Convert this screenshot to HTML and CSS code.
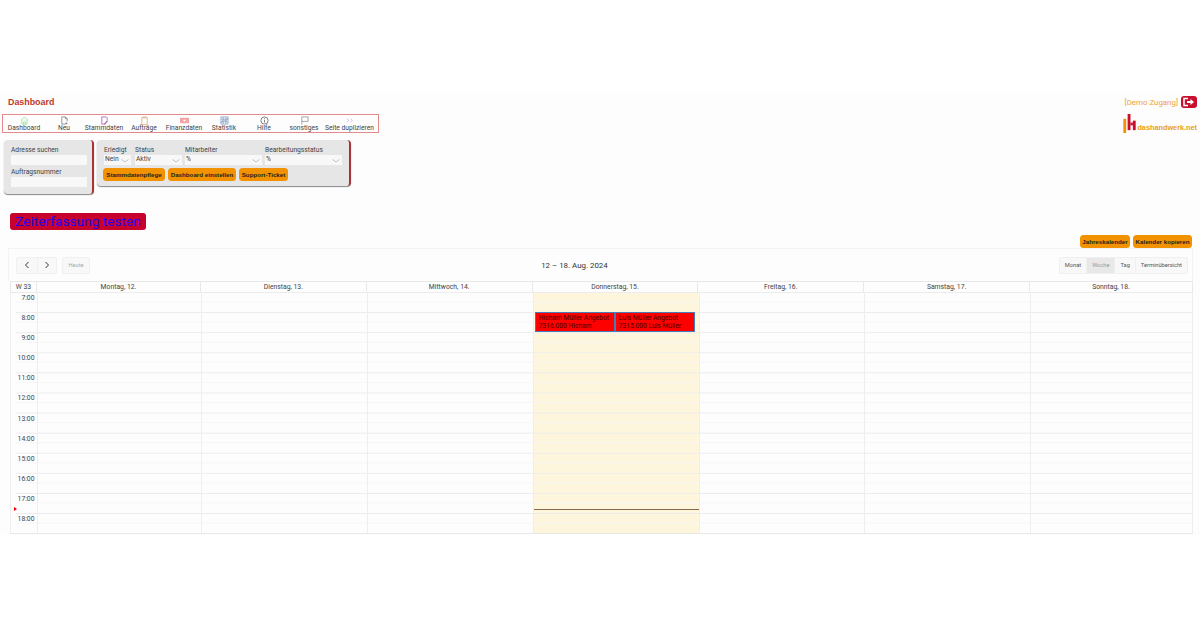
FILE: index.html
```html
<!DOCTYPE html>
<html lang="de">
<head>
<meta charset="utf-8">
<title>Dashboard</title>
<link rel="stylesheet" href="styles.css">
</head>
<body>
<div class="page">
  <header class="top">
    <div class="top-left">
      <h1 class="title">Dashboard</h1>
      <nav class="menu">
        <a class="menu-item"><svg class="ico" viewBox="0 0 10 10"><path d="M1 5 5 1l4 4M2.200 4.200V9h5.600V4.200M4 9V6.500h2V9" stroke="#8fdc8f"/></svg><span>Dashboard</span></a>
        <a class="menu-item"><svg class="ico" viewBox="0 0 10 10"><path d="M2 1h4l2 2v3M6 1v2h2M2 1v8h4M7 7v2.500M5.800 8.200h2.400" stroke="#777"/></svg><span>Neu</span></a>
        <a class="menu-item"><svg class="ico" viewBox="0 0 10 10"><path d="M2 1h5l1 1v3M2 1v8h4M8 5 5.500 8l-.5 1 1-.4L8.600 5.600" stroke="#a54aa5"/></svg><span>Stammdaten</span></a>
        <a class="menu-item"><svg class="ico" viewBox="0 0 10 10"><path d="M3.500 1.500H2V9.500h6V1.500H6.500M3.500 1h3v1.200h-3z" stroke="#d9a679"/></svg><span>Aufträge</span></a>
        <a class="menu-item"><svg class="ico" viewBox="0 0 10 10"><path d="M.5 2.500h9v5h-9z" fill="#f4a6a6" stroke="#f08a8a"/><circle cx="5" cy="5" r="1.200" fill="#fff"/></svg><span>Finanzdaten</span></a>
        <a class="menu-item"><svg class="ico" viewBox="0 0 10 10"><path d="M1 1h8v8H1zM1 3.500h8M1 6.500h8M3.500 1v8M6.500 1v8M1.500 7.500 4 4l2.500 2L9 2" stroke="#7f9fc0"/></svg><span>Statistik</span></a>
        <a class="menu-item"><svg class="ico" viewBox="0 0 10 10"><circle cx="5" cy="5" r="4" stroke="#555"/><path d="M5 4.300V7.300M5 2.500v1" stroke="#555"/></svg><span>Hilfe</span></a>
        <a class="menu-item"><svg class="ico" viewBox="0 0 10 10"><path d="M2 9.500V1h7v5H2" stroke="#888"/></svg><span>sonstiges</span></a>
        <a class="menu-item menu-last"><svg class="ico" viewBox="0 0 10 10"><path d="M2 3l2 2-2 2M6 3l2 2-2 2" stroke="#c9a0e8"/></svg><span>Seite duplizieren</span></a>
      </nav>
    </div>
    <div class="top-right">
      <div class="user"><span class="demo">[Demo Zugang]</span><span class="logout"><svg viewBox="0 0 16 12" class="logout-ico"><path d="M7 2.500H3v7h4" stroke="#fff" stroke-width="1.500" fill="none"/><path d="M6 5h3.500V3L13 6 9.500 9V7H6z" fill="#fff"/></svg></span></div>
      <div class="logo"><svg class="logo-mark" viewBox="0 0 14 20"><rect x="0" y="5" width="3" height="15" fill="#f39200"/><rect x="4.500" y="0" width="3" height="17" fill="#c8102e"/><rect x="10" y="7" width="3" height="10" fill="#c8102e"/><rect x="7.500" y="9" width="2.500" height="3" fill="#c8102e"/></svg><span class="logo-text">dashandwerk.net</span></div>
    </div>
  </header>

  <section class="filters">
    <div class="panel panel-search">
      <label class="field"><span class="lbl">Adresse suchen</span><span class="input"></span></label>
      <label class="field"><span class="lbl">Auftragsnummer</span><span class="input"></span></label>
    </div>
    <div class="panel panel-main">
      <div class="selects">
        <label class="field s-erl"><span class="lbl">Erledigt</span><span class="select">Nein<svg class="chev" viewBox="0 0 8 4"><path d="M.5.500 4 3 7.500.5"/></svg></span></label>
        <label class="field s-sta"><span class="lbl">Status</span><span class="select">Aktiv<svg class="chev" viewBox="0 0 8 4"><path d="M.5.500 4 3 7.500.5"/></svg></span></label>
        <label class="field s-mit"><span class="lbl">Mitarbeiter</span><span class="select">%<svg class="chev" viewBox="0 0 8 4"><path d="M.5.500 4 3 7.500.5"/></svg></span></label>
        <label class="field s-bea"><span class="lbl">Bearbeitungsstatus</span><span class="select">%<svg class="chev" viewBox="0 0 8 4"><path d="M.5.500 4 3 7.500.5"/></svg></span></label>
      </div>
      <div class="btns">
        <a class="btn b-stamm">Stammdatenpflege</a>
        <a class="btn b-dash">Dashboard einstellen</a>
        <a class="btn b-supp">Support-Ticket</a>
      </div>
    </div>
  </section>

  <a class="test-btn">Zeiterfassung testen</a>

  <div class="cal-actions">
    <a class="btn b-jahr">Jahreskalender</a>
    <a class="btn b-kop">Kalender kopieren</a>
  </div>

  <section class="cal">
    <div class="cal-bar">
      <div class="nav-left">
        <div class="group">
          <span class="g-btn nav"><svg viewBox="0 0 6 8" class="arrow"><path d="M4.500 1 1.500 4l3 3"/></svg></span>
          <span class="g-btn nav"><svg viewBox="0 0 6 8" class="arrow"><path d="M1.500 1l3 3-3 3"/></svg></span>
        </div>
        <span class="g-btn today">Heute</span>
      </div>
      <div class="range">12 – 18. Aug. 2024</div>
      <div class="group">
        <span class="g-btn">Monat</span>
        <span class="g-btn active">Woche</span>
        <span class="g-btn">Tag</span>
        <span class="g-btn">Terminübersicht</span>
      </div>
    </div>
    <div class="cal-head">
      <div class="cw">W 33</div>
      <div class="dh">Montag, 12.</div>
      <div class="dh">Dienstag, 13.</div>
      <div class="dh">Mittwoch, 14.</div>
      <div class="dh">Donnerstag, 15.</div>
      <div class="dh">Freitag, 16.</div>
      <div class="dh">Samstag, 17.</div>
      <div class="dh">Sonntag, 18.</div>
    </div>
    <div class="cal-body">
      <div class="hours">
        <div class="hour"><span>7:00</span></div>
        <div class="hour"><span>8:00</span></div>
        <div class="hour"><span>9:00</span></div>
        <div class="hour"><span>10:00</span></div>
        <div class="hour"><span>11:00</span></div>
        <div class="hour"><span>12:00</span></div>
        <div class="hour"><span>13:00</span></div>
        <div class="hour"><span>14:00</span></div>
        <div class="hour"><span>15:00</span></div>
        <div class="hour"><span>16:00</span></div>
        <div class="hour"><span>17:00</span></div>
        <div class="hour"><span>18:00</span></div>
      </div>
      <div class="col"></div>
      <div class="col"></div>
      <div class="col"></div>
      <div class="col col-today">
        <div class="event ev-a">Hicham Müller Angebot<br>7316.000 Hicham</div>
        <div class="event ev-b">Luis Müller Angebot<br>7315.000 Luis Müller</div>
        <div class="now-line"></div>
      </div>
      <div class="col"></div>
      <div class="col"></div>
      <div class="col"></div>
      <div class="now-arrow"></div>
    </div>
  </section>
</div>
</body>
</html>
```
FILE: styles.css
```css
* { box-sizing: border-box; }
html, body { margin: 0; padding: 0; background: #fff; }
body { width: 1200px; height: 628px; overflow: hidden; font-family: Roboto, "Liberation Sans", Arial, sans-serif; color: #333; }
.page { margin-top: 93px; height: 442px; background: #fdfdfd; }

.top { display: flex; justify-content: space-between; padding: 3px 3px 0 2px; height: 45px; }
.title { margin: 0 0 0 6px; font-family: "Liberation Sans", Arial, sans-serif; font-size: 8.900px; line-height: 12px; font-weight: bold; color: #c0392b; }
.menu { display: flex; margin-top: 6px; padding-left: 1px; width: 377px; height: 19px; border: 1px solid #e58a8a; }
.menu-item { display: flex; flex-direction: column; align-items: center; width: 40px; padding-top: 1px; font-size: 6.700px; line-height: 8px; color: #444; white-space: nowrap; }
.menu-last { width: 51px; }
.ico { display: block; width: 9px; height: 9px; fill: none; stroke-width: .8; margin-bottom: -1px; }

.top-right { display: flex; flex-direction: column; align-items: flex-end; }
.user { display: flex; align-items: center; gap: 3px; }
.demo { font-size: 7.900px; color: #f0a040; }
.logout { display: block; width: 16px; height: 12px; background: #c8102e; border-radius: 3px; }
.logout-ico { display: block; width: 16px; height: 12px; }
.logo { display: flex; align-items: flex-end; margin-top: 6px; }
.logo-mark { display: block; width: 14px; height: 19px; }
.logo-text { margin-bottom: 1.500px; font-family: "Liberation Sans", Arial, sans-serif; font-size: 7.300px; line-height: 9px; font-weight: bold; color: #e8a020; }

.filters { display: flex; align-items: flex-start; gap: 3px; padding: 2px 0 0 4px; height: 75px; }
.panel { background: #e6e6e6; border-radius: 4px; border-right: 2px solid #a33; box-shadow: 0 1px 1px #888; }
.panel-search { width: 90px; height: 54px; padding: 5px 5px 0 7px; }
.panel-main { width: 254px; height: 46px; padding: 5px 4px 0 7px; }
.field { display: block; }
.lbl { display: block; font-size: 6.700px; line-height: 10px; color: #444; }
.input { display: block; height: 10px; background: #f8f8f8; }
.panel-search .field + .field { margin-top: 2px; }
.selects { display: flex; }
.select { position: relative; display: block; height: 10px; line-height: 9px; font-size: 6.700px; padding-left: 1px; background: #f8f8f8; color: #444; }
.chev { position: absolute; right: 2px; top: 4px; width: 8px; height: 4px; fill: none; stroke: #aaa; stroke-width: .7; }
.s-erl { width: 27px; margin-right: 4px; } .s-sta { width: 47px; margin-right: 3px; }
.s-mit { width: 77px; margin-right: 3px; } .s-bea { width: 77px; }
.btns { display: flex; gap: 3px; margin-top: 3px; margin-left: -1px; }
.btn { display: block; height: 13px; line-height: 13px; font-family: "Liberation Sans", Arial, sans-serif; font-size: 6.200px; font-weight: bold; text-align: center; color: #222; background: #f39200; border-radius: 3.500px; white-space: nowrap; }
.b-stamm { width: 62px; } .b-dash { width: 68px; } .b-supp { width: 49px; }
.b-jahr { width: 50px; } .b-kop { width: 59px; }

.test-btn { display: block; margin-left: 10px; width: 136px; height: 17px; line-height: 17px; font-size: 13.700px; text-align: center; color: #2200ee; background: #c8002d; border-radius: 3px; }

.cal-actions { display: flex; justify-content: flex-end; gap: 3px; padding-right: 8px; margin-top: 5px; }

.cal { margin-left: 8px; margin-right: 7px; }
.cal-bar { display: flex; justify-content: space-between; align-items: center; height: 33px; padding: 0 4px 0 7px; border: 1px solid #f3f3f3; border-bottom: 0; }
.nav-left { display: flex; gap: 5px; }
.group { display: flex; background: #f8f8f8; border: 1px solid #f0f0f0; border-radius: 2px; }
.g-btn { display: block; height: 15px; line-height: 15px; padding: 0 5px; font-size: 5.700px; color: #555; }
.g-btn + .g-btn { border-left: 1px solid #f0f0f0; }
.nav { width: 19.500px; padding: 0; display: flex; align-items: center; justify-content: center; }
.arrow { width: 6px; height: 8px; fill: none; stroke: #333; stroke-width: 1; }
.today { background: #f8f8f8; border: 1px solid #f0f0f0; height: 17px; border-radius: 2px; color: #aaa; padding: 0 5.500px; }
.active { background: #e8e8e8; color: #999; }
.range { font-size: 7.900px; color: #333; }

.cal-head, .cal-body { display: grid; margin-left: 2px; }
.cal-head { grid-template-columns: 26px 164px repeat(5, 165.800px) 1fr; height: 11px; border-top: 1px solid #e8e8e8; border-right: 1px solid #e8e8e8; }
.cw, .dh { font-size: 6.800px; line-height: 10px; text-align: center; color: #444; border-left: 1px solid #e8e8e8; border-bottom: 1px solid #e8e8e8; }
.cal-body { position: relative; grid-template-columns: 27px 164.300px repeat(5, 165.750px) 1fr; border-right: 1px solid #eee; border-bottom: 1px solid #e8e8e8; }
.hours { border-left: 1px solid #eee; background-image: linear-gradient(to bottom, #ececec 1px, transparent 1px, transparent 10px, #f6f6f6 10px, #f6f6f6 11px, transparent 11px); background-size: 21px 20.100px; background-position: right top; background-repeat: repeat-y; }
.hour { height: 20.100px; padding-right: 2.500px; text-align: right; font-size: 6.800px; line-height: 12px; color: #444; }
.col { position: relative; height: 241px; border-left: 1px solid #eee; background-image: linear-gradient(to bottom, #ececec 1px, transparent 1px, transparent 10px, #f6f6f6 10px, #f6f6f6 11px, transparent 11px); background-size: 100% 20.100px; }
.col-today { background-color: #fdf6dc; }
.event { position: absolute; top: 20px; height: 20px; width: 80px; padding: 1px 3px; font-size: 6.700px; line-height: 8px; color: #400; background: #f00; border: 1px solid #4a7ab8; white-space: nowrap; overflow: hidden; }
.ev-a { left: 1px; }
.ev-b { left: 81px; }
.now-line { position: absolute; left: 0; right: 0; top: 217px; height: 1px; background: #8a6a4a; }
.now-arrow { position: absolute; left: 4px; top: 215px; width: 0; height: 0; border-left: 3px solid #e00; border-top: 2.500px solid transparent; border-bottom: 2.500px solid transparent; }
```
